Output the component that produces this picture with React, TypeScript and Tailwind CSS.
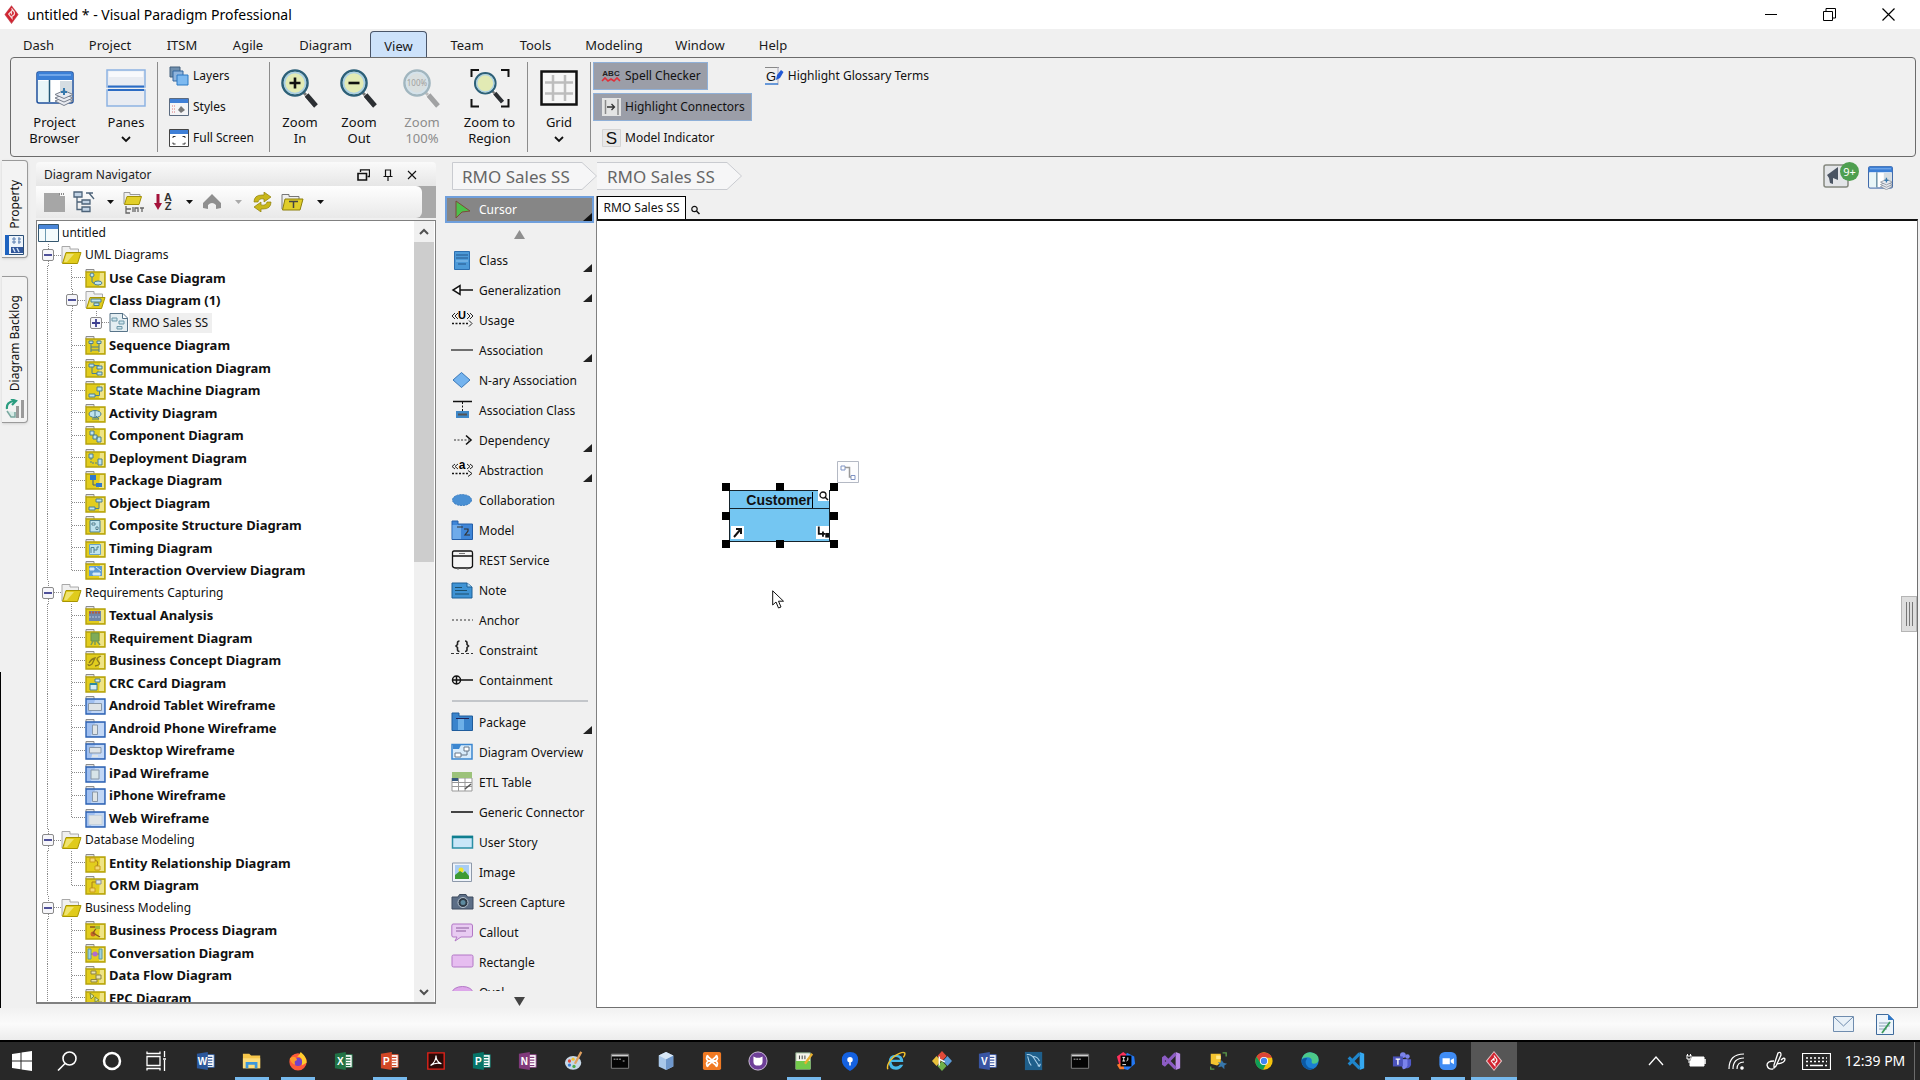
import React from 'react';

/* ---------- shared icons ---------- */

function Logo() {
  return (
    <svg width="15" height="19" viewBox="0 0 16 20">
      <path d="M8 0 15.500 10 8 20 .5 10Z" fill="#c8434f" />
      <path d="M8 1.500 14.300 10 8 18.500 1.700 10Z" fill="#d2232f" />
      <path d="M8 3.500 11 7.500Q12 10.500 8.500 12V14L5 9.500 8 6.500V10" fill="none" stroke="#f4dcdc" strokeWidth="1.300" />
    </svg>
  );
}

function BrowserIcon({ w, h }: { w: number; h: number }) {
  return (
    <svg width={w} height={h} viewBox="0 0 38 35" preserveAspectRatio="none">
      <rect x="1" y="1" width="36" height="31" rx="2" fill="#fff" stroke="#1d4f9c" strokeWidth="1.500" />
      <path d="M1 3Q1 1 3 1H35Q37 1 37 3V9H1Z" fill="#3b7fd6" />
      <path d="M3 3H35V5H3Z" fill="#6fa5e8" />
      <path d="M2 10H13V31H2Z" fill="#e9f6f8" />
      <path d="M24 10H36V31H24Z" fill="#d5dde2" />
      <path d="M13.500 9V31" stroke="#235a78" strokeWidth="1.500" />
      <g fill="#e8eaf0" stroke="#777f8c" strokeWidth="1">
        <path d="M19 30 28 26 37 30 28 34.500Z" />
        <path d="M19 27 28 23 37 27 28 31Z" />
        <path d="M19 23.500 28 19.500 37 23.500 28 27.500Z" />
      </g>
      <path d="M28 17V24M25 21H31" stroke="#3779ad" strokeWidth="2" />
    </svg>
  );
}

function Magnifier({ kind }: { kind: 'in' | 'out' | '100' | 'region' }) {
  const faded = kind === '100';
  const region = kind === 'region';
  return (
    <svg width="40" height="40" viewBox="0 0 40 40">
      {region && (
        <path d="M1.500 9V2H9M31 2H38.500V9M1.500 31V38.500H9M31 38.500H38.500V31" fill="none" stroke="#111" strokeWidth="2" />
      )}
      <g transform={region ? 'translate(3 3) scale(.82)' : undefined} opacity={faded ? 0.4 : 1}>
        <path d="M24 25 36 38" stroke="#fff" strokeWidth="6" />
        <path d="M23 24 26 27" stroke="#777" strokeWidth="3" />
        <path d="M26.500 27 36 38" stroke="#2c2f33" strokeWidth="5" />
        <circle cx="15" cy="15" r="12.500" fill={faded ? '#b9c8c8' : '#e2eab4'} stroke="#2d6078" strokeWidth="2.600" />
        <circle cx="15" cy="15" r="10.500" fill="none" stroke="#a9cfe6" strokeWidth="1.600" />
        {kind === 'in' && <path d="M9.500 15H20.500M15 9.500V20.500" stroke="#111" strokeWidth="2.600" />}
        {kind === 'out' && <path d="M9.500 15H20.500" stroke="#111" strokeWidth="2.600" />}
        {faded && (
          <text x="15" y="18" fontSize="8" textAnchor="middle" fill="#222" fontFamily="Noto Sans">100%</text>
        )}
      </g>
    </svg>
  );
}

function ChevronDown() {
  return (
    <svg width="10" height="7" viewBox="0 0 10 7">
      <path d="M1 1 5 5 9 1" fill="none" stroke="#111" strokeWidth="1.800" />
    </svg>
  );
}

/* ---------- title bar and ribbon ---------- */

function TitleBar() {
  return (
    <header className="flex h-[29px] shrink-0 items-center bg-white">
      <span className="flex h-full flex-1 items-center gap-2 pl-1">
        <Logo />
        <h1 className="text-sm leading-5 text-black">untitled * - Visual Paradigm Professional</h1>
      </span>
      <div className="flex h-[30px] flex-[0_1_770px] items-center justify-end border-b border-black">
        <button aria-label="Minimize" className="flex w-[59px] justify-center">
          <svg width="12" height="12"><path d="M0 6.500H12" stroke="#000" /></svg>
        </button>
        <button aria-label="Restore" className="flex w-[59px] justify-center">
          <svg width="13" height="13" fill="none" stroke="#000"><path d="M.5 3.500H9.500V12.500H.5ZM3 3V.5H12.500V10H10" /></svg>
        </button>
        <button aria-label="Close" className="flex w-[59px] justify-center">
          <svg width="13" height="13"><path d="M.5.5 12.500 12.500M12.500.5.5 12.500" stroke="#000" strokeWidth="1.200" /></svg>
        </button>
        <span className="w-[2px]" />
      </div>
    </header>
  );
}

const tabs: [string, string][] = [
  ['Dash', 'w-[65px]'],
  ['Project', 'w-[78px]'],
  ['ITSM', 'w-[66px]'],
  ['Agile', 'w-[66px]'],
  ['Diagram', 'w-[89px]'],
  ['View', 'w-[57px]'],
  ['Team', 'w-20'],
  ['Tools', 'w-[57px]'],
  ['Modeling', 'w-[100px]'],
  ['Window', 'w-[72px]'],
  ['Help', 'w-[74px]'],
];

function RibbonTabs() {
  return (
    <nav className="flex h-7 shrink-0 items-end bg-[#f0f0f0] pl-1.5">
      {tabs.map(([name, w]) => (
        <button
          key={name}
          className={`${w} h-[26px] shrink-0 rounded-t-sm pt-0.5 text-[13px] leading-4 text-[#1a1a1a] ${
            name === 'View' ? 'border border-b-0 border-[#4a5568] bg-[#cde2fa]' : ''
          }`}
        >
          {name}
        </button>
      ))}
    </nav>
  );
}

function BigButton({ icon, lines, w, faded, chevron }: { icon: React.ReactNode; lines: string[]; w: string; faded?: boolean; chevron?: boolean }) {
  return (
    <button className={`${w} flex shrink-0 flex-col items-center pt-2 text-[13px] leading-4 ${faded ? 'text-[#8c8c8c]' : 'text-[#111]'}`}>
      <span className="mb-1 flex h-11 items-center justify-center">{icon}</span>
      {lines.map((l) => (
        <span key={l}>{l}</span>
      ))}
      {chevron && <span className="flex h-4 items-center pt-0.5"><ChevronDown /></span>}
    </button>
  );
}

function SmallButton({ icon, label, active }: { icon: React.ReactNode; label: string; active?: boolean }) {
  return (
    <button
      className={`flex h-7 items-center gap-1 pr-1.5 pl-[7px] text-[12px] leading-4 text-[#111] ${
        active ? 'border border-[#8fb0d8] bg-[#9b9ea8]' : 'border border-transparent'
      }`}
    >
      <span className="flex w-5 justify-center">{icon}</span>
      {label}
    </button>
  );
}

const Divider = () => <span className="my-1 w-px shrink-0 bg-[#8c8c8c]" />;

function Ribbon() {
  return (
    <section className="shrink-0 bg-[#f0f0f0] pr-[4px] pl-[10px]">
      <div className="flex h-[100px] rounded-[4px] border border-[#6b6b6b]">
        <BigButton w="w-[87px]" icon={<BrowserIcon w={38} h={35} />} lines={['Project', 'Browser']} />
        <BigButton
          w="w-[56px]"
          chevron
          lines={['Panes']}
          icon={
            <svg width="40" height="38" viewBox="0 0 40 38">
              <path d="M1 1H39V18H1ZM1 21H39V37H1Z" fill="#e9ecf2" stroke="#8db3e2" strokeWidth="1.500" />
              <path d="M2 17.500H38M2 21H38" stroke="#2c6cc4" strokeWidth="2" />
              <path d="M3 2.500H37V8H3Z" fill="#f8f9fc" />
            </svg>
          }
        />
        <span className="w-[3px]" />
        <Divider />
        <div className="flex w-[111px] flex-col gap-[3px] pt-1 pl-[3px]">
          <SmallButton
            label="Layers"
            icon={
              <svg width="20" height="20" viewBox="0 0 20 20">
                <path d="M1 1H11V11H1Z" fill="#6f8fae" stroke="#44607c" />
                <path d="M4 5H14V15H4Z" fill="#8fb4dc" stroke="#33679f" />
                <path d="M8 9H19V19H8Z" fill="#7db9f0" stroke="#2b78c4" />
              </svg>
            }
          />
          <SmallButton
            label="Styles"
            icon={
              <svg width="20" height="18" viewBox="0 0 20 18">
                <path d="M.5.5H19.500V17.500H.5Z" fill="#f4f4f6" stroke="#5b6b80" />
                <path d="M1 1H19V5H1Z" fill="#3f7fd6" />
                <path d="M3 8H7M3 11H7M3 14H7" stroke="#d77" strokeWidth="1" strokeDasharray="1 1" />
                <path d="m12 8 4 4-4 3-3-3Z" fill="#777" />
              </svg>
            }
          />
          <SmallButton
            label="Full Screen"
            icon={
              <svg width="20" height="18" viewBox="0 0 20 18">
                <path d="M.5.5H19.500V17.500H.5Z" fill="#fff" stroke="#444" />
                <path d="M1 1H19V5H1Z" fill="#3f7fd6" />
                <path d="M4 9V7.500H6.500M13.500 7.500H16V9M4 13.500V15H6.500M13.500 15H16V13.500" fill="none" stroke="#333" />
              </svg>
            }
          />
        </div>
        <Divider />
        <BigButton w="w-[60px]" icon={<Magnifier kind="in" />} lines={['Zoom', 'In']} />
        <BigButton w="w-[58px]" icon={<Magnifier kind="out" />} lines={['Zoom', 'Out']} />
        <BigButton w="w-[68px]" icon={<Magnifier kind="100" />} lines={['Zoom', '100%']} faded />
        <BigButton w="w-[67px]" icon={<Magnifier kind="region" />} lines={['Zoom to', 'Region']} />
        <span className="w-1" />
        <Divider />
        <BigButton
          w="w-[62px]"
          chevron
          lines={['Grid']}
          icon={
            <svg width="38" height="36" viewBox="0 0 38 36">
              <path d="M1.500 1.500H36.500V34.500H1.500Z" fill="#f6f6f6" stroke="#111" strokeWidth="2.500" />
              <path d="M13 5V31M25 5V31M5 12.500H33M5 23.500H33" stroke="#bdbdbd" strokeWidth="2.500" />
            </svg>
          }
        />
        <Divider />
        <div className="flex flex-col items-start gap-[3px] pt-1 pl-0.5">
          <SmallButton
            active
            label="Spell Checker"
            icon={
              <svg width="20" height="14" viewBox="0 0 20 14">
                <text x="10" y="7" fontSize="8" fontWeight="bold" textAnchor="middle" fontFamily="Liberation Sans" fill="#222">ABC</text>
                <path d="M1 12 4 9 7 12 10 10 13 12 16 9 19 12" fill="none" stroke="#e0303a" strokeWidth="1.600" />
              </svg>
            }
          />
          <SmallButton
            active
            label="Highlight Connectors"
            icon={
              <svg width="19" height="18" viewBox="0 0 19 18">
                <path d="M0 0H19V18H0Z" fill="#e4e4e4" />
                <path d="M3.500 2V16M16 1V17" stroke="#8a8a8a" strokeWidth="1.500" />
                <path d="M5 9H12M9.500 6 12.500 9 9.500 12" fill="none" stroke="#333" strokeWidth="1.300" />
              </svg>
            }
          />
          <SmallButton
            label="Model Indicator"
            icon={
              <svg width="19" height="20" viewBox="0 0 19 20">
                <path d="M.5 1.500H18.500V18.500H.5Z" fill="#e8e8e8" stroke="#d4d4d4" />
                <text x="9.500" y="16" fontSize="17" textAnchor="middle" fontFamily="Liberation Sans" fill="#111">S</text>
              </svg>
            }
          />
        </div>
        <div className="pt-1 pl-1">
          <SmallButton
            label="Highlight Glossary Terms"
            icon={
              <svg width="20" height="20" viewBox="0 0 20 20">
                <path d="M1 1.500H15" stroke="#888" />
                <path d="M14 1V19" stroke="#aab" />
                <path d="M1 18H14" stroke="#3a7bd0" strokeWidth="1.500" />
                <text x="7" y="15" fontSize="13" textAnchor="middle" fontFamily="Liberation Sans" fill="#111">G</text>
                <path d="M12 14 13 9 17 4 19.500 6 16 12Z" fill="#2159d6" />
              </svg>
            }
          />
        </div>
      </div>
    </section>
  );
}

/* ---------- side strip ---------- */

function SideStrip() {
  return (
    <aside className="flex w-[29px] shrink-0 flex-col gap-[18px] bg-[#f0f0f0] pt-[3px]">
      <button className="ml-0.5 flex h-[98px] w-[26px] flex-col items-center justify-end gap-1.5 rounded-r-sm border border-l-0 border-[#9a9a9a] bg-[#f3f3f3] pb-[2px] shadow-sm">
        <span className="rotate-180 text-[12px] leading-4 text-[#111] [writing-mode:vertical-rl]">Property</span>
        <svg width="19" height="20" viewBox="0 0 19 20" className="shrink-0">
          <path d="M.5.5H18.500V19.500H.5Z" fill="#eef4fb" stroke="#2b4f78" />
          <path d="M0 0H4V20H0Z" fill="#1e63c0" />
          <path d="M7 4H11M7 7H11M13 4H16M13 7H16M9 2V9M14 2V9" stroke="#5b7fb0" />
          <path d="M6 12H18V18H6Z" fill="#31569a" />
          <path d="M8 13 10 17M12 13 14 17" stroke="#cfe0f5" strokeWidth="1.500" />
        </svg>
      </button>
      <button className="ml-0.5 flex h-[147px] w-[26px] flex-col items-center justify-end gap-2 rounded-r-sm border border-l-0 border-[#9a9a9a] bg-[#f3f3f3] pb-[3px] shadow-sm">
        <span className="rotate-180 text-[12px] leading-4 text-[#111] [writing-mode:vertical-rl]">Diagram Backlog</span>
        <svg width="20" height="20" viewBox="0 0 20 20" className="shrink-0">
          <path d="M2 10Q1 3 9 2M6 0 11 2 7 6" fill="none" stroke="#2b9d80" strokeWidth="2.200" />
          <path d="M11 7H14V19H11ZM16 1H19V19H16Z" fill="#9a9a9a" />
          <path d="M2 12 6 18H10V13" fill="#d6ebe6" stroke="#7aa8a0" strokeWidth="1.500" />
        </svg>
      </button>
      <span className="mt-[231px] w-px flex-1 bg-black" />
    </aside>
  );
}

/* ---------- diagram navigator ---------- */

const P = '#bfe3ee';
const D = '#4d7f8f';
const glyphs: Record<string, React.ReactNode> = {
  usecase: <><circle cx="7" cy="7" r="2" fill={P} stroke={D} /><path d="M7 9V14L10 16" fill="none" stroke={D} /><ellipse cx="13" cy="15" rx="4" ry="2" fill={P} stroke={D} /></>,
  seq: <><path d="M4 6H8V8.500H4ZM12 6H16V8.500H12Z" fill={P} stroke={D} /><path d="M6 9V17M14 9V17M6 12H14M6 15H14" stroke={D} /></>,
  comm: <><path d="M4 6H9V9H4ZM12 8H17V11H12ZM12 14H17V17H12Z" fill={P} stroke={D} /><path d="M7 9V15.500H12M9 7.500H14" fill="none" stroke={D} /></>,
  state: <><path d="M12 7H17V11H12ZM4 14H10V17H4Z" fill={P} stroke={D} /><path d="M10 15.500H14.500V11" fill="none" stroke={D} /></>,
  activity: <><ellipse cx="10" cy="11" rx="6" ry="3.500" fill={P} stroke={D} /><path d="M10 8V14M7 16H14L11 13" fill="none" stroke={D} /></>,
  component: <><path d="M5 6H9V10H5ZM8 10H12V14H8ZM12 12H16V17H12Z" fill={P} stroke={D} /></>,
  deploy: <><path d="M4 6H8V10H4ZM13 11H17V17H13Z" fill={P} stroke={D} /><path d="M6 10V15H13" fill="none" stroke={D} strokeDasharray="2 1" /></>,
  pkg: <><path d="M5 5H11V10H5ZM11 13H17V17H11Z" fill="#2f78cc" /><path d="M8 10V15H11" fill="none" stroke="#3b5f7d" /></>,
  object: <><path d="M11 6H17V9H11ZM4 14H10V17H4Z" fill={P} stroke={D} /><path d="M10 15.500H14V9" fill="none" stroke={D} /></>,
  composite: <><path d="M5 5.500H15V17H5Z" fill={P} stroke={D} /><path d="M7 8H10V10H7ZM11 12H13V14.500H11Z" fill="#fff" stroke={D} /></>,
  timing: <><path d="M4.500 6.500H15.500V16.500H4.500Z" fill={P} stroke="#6aa4c4" /><path d="M6 15V9.500H9V15M9 12H12V9H14" fill="none" stroke={D} /></>,
  overview: <><path d="M4 6H17V16H4Z" fill="#5e9bd4" /><path d="M5 8H9V10H5ZM8 13H15V15H8ZM11 7 16 11" fill="#dff0fa" stroke="#cfe6f6" /></>,
  text: <><path d="M4 6H16V16H4Z" fill="#6f86a8" /><path d="M4 7.500H16" stroke="#b35c3c" strokeWidth="2" strokeDasharray="2 1" /><path d="M4 12H16" stroke="#b9c8dd" strokeDasharray="2 1" /></>,
  req: <><path d="M6 5H14V13H6Z" fill="#7eab58" stroke="#6b9447" /><path d="M8 13 6 17M12 13 15 17M10 13V17" stroke="#779a5d" strokeWidth="1.500" /></>,
  concept: <><path d="M3 14Q3 17 7 14L10 8Q6 9 4 13M16 6Q10 8 13 11Q17 15 10 16" fill="none" stroke="#8b7a1d" strokeWidth="1.300" /></>,
  crc: <><path d="M5 10.500H12V17H5ZM10 6H15V9H10Z" fill="#d6ecf4" stroke={D} /><path d="M5 11H12" stroke="#2b8aa0" strokeWidth="2" /></>,
  erd: <><path d="M5 5H10V9H5ZM10 13H15V17H10Z" fill="#f4d873" stroke="#c99b1c" /><path d="M10 7Q14 8 12 13" fill="none" stroke="#a8801a" /></>,
  orm: <><path d="M11 5H16V9H11Z" fill="#dfe5ea" stroke="#8a9199" /><path d="M5 13H10V17H5Z" fill="#f4d873" stroke="#c99b1c" /><path d="M7 13V7H11" fill="none" stroke="#a8801a" /></>,
  bpd: <><circle cx="8" cy="14" r="2.500" fill="#c9652b" /><path d="M5 7H12L8 13L15 17" fill="none" stroke="#8a5a20" strokeWidth="1.300" /><path d="M10 6H15V9H10Z" fill="#9fb838" /></>,
  conv: <><path d="M3 6H6V16H3ZM14 6H17V16H14Z" fill="#9fd0dc" stroke="#5a9aa8" /><path d="M6 11H14" stroke="#777" /><circle cx="10" cy="11" r="2.500" fill="#b06cd0" /></>,
  dfd: <><path d="M6 6H11V9H6ZM11 10H16V14H11ZM6 14.500H12V17H6Z" fill="#e8e2b0" stroke="#8b8245" /></>,
  epc: <><path d="M5 5 9 8 6 11ZM10 9 14 12 10 14ZM13 14H17V17H13Z" fill="#d9e8b0" stroke="#7f8c3a" /></>,
  wide: <path d="M3.500 8.500H16.500V15.500H3.500Z" fill="#dfe4e6" stroke="#8897a8" />,
  tall: <path d="M7.500 7H12.500V16.500H7.500Z" fill="#dfe4e6" stroke="#8897a8" />,
  desk: <><path d="M4.500 7.500H16V13H4.500Z" fill="#dfe4e6" stroke="#8897a8" /><path d="M7 16H13" stroke="#dfe4e6" strokeWidth="2" /></>,
  pad: <path d="M6 7H14V16H6Z" fill="#d8e4e8" stroke="#8897a8" />,
  web: <path d="M4 7.500H17V16.500H4Z" fill="#dfe4e6" stroke="#c6d2dc" />,
};

function DiagramFolder({ glyph, blue }: { glyph: string; blue?: boolean }) {
  return (
    <svg width="21" height="20" viewBox="0 0 21 20" className="shrink-0">
      <path d="M1 4V1.500H9V4" fill="#e3e3e3" stroke="#8d8d8d" />
      <path d="M1 4H20V19H1Z" fill={blue ? '#9fbff0' : '#e2cd1d'} stroke={blue ? '#2d62b3' : '#b5a20c'} strokeWidth="1.400" />
      <path d={blue ? 'M10 5H19V18H6Z' : 'M15 5H19V18H14Z'} fill={blue ? '#c3d8f6' : '#efe486'} />
      {glyphs[glyph]}
    </svg>
  );
}

function OpenFolder({ diagram }: { diagram?: boolean }) {
  return (
    <svg width="21" height="20" viewBox="0 0 21 20" className="shrink-0">
      <path d="M1 18V1.500H9V4H17.500V8" fill="#f0f0f0" stroke="#a8a8a8" />
      <path d="M1.500 18.500 5 7.500H20L16.500 18.500Z" fill="#e0cb1c" stroke="#a89500" />
      <path d="M5.500 9H13L6 17H3Z" fill="#efe36f" />
      {diagram && <path d="M6 9H16V12H6ZM9 13H14V15.500H9Z" fill={P} stroke={D} />}
    </svg>
  );
}

/* dotted guide lines that tie the rows of the tree together */
const dots = 'bg-[repeating-linear-gradient(to_bottom,#8a8a8a_0_1px,transparent_1px_2px)]';
function Guide({ half }: { half?: boolean }) {
  return <span className={`w-px shrink-0 ${dots} ${half ? 'h-1/2 self-start' : 'h-full'}`} />;
}
const Twig = ({ w }: { w: string }) => (
  <span className={`${w} h-px shrink-0 bg-[repeating-linear-gradient(to_right,#8a8a8a_0_1px,transparent_1px_2px)]`} />
);

function Expander({ open, end }: { open: boolean; end?: boolean }) {
  return (
    <span className="flex h-full flex-col items-center">
      <span className={`w-px flex-1 ${dots}`} />
      <button aria-label={open ? 'Collapse' : 'Expand'} className="flex size-3 shrink-0 items-center justify-center rounded-xs border border-[#8a8a8a] bg-[#f6f6fa]">
        <svg width="10" height="10" viewBox="0 0 10 10">
          <path d={open ? 'M1 5H9' : 'M1 5H9M5 1V9'} stroke="#3d3f8f" strokeWidth="1.800" />
        </svg>
      </button>
      <span className={`w-px flex-1 ${end ? '' : dots}`} />
    </span>
  );
}

type Row = { t: string; k: 'root' | 'group' | 'leaf' | 'class' | 'doc'; g?: string; blue?: boolean; last?: boolean };

const rows: Row[] = [
  { t: 'untitled', k: 'root' },
  { t: 'UML Diagrams', k: 'group' },
  { t: 'Use Case Diagram', k: 'leaf', g: 'usecase' },
  { t: 'Class Diagram (1)', k: 'class' },
  { t: 'RMO Sales SS', k: 'doc' },
  { t: 'Sequence Diagram', k: 'leaf', g: 'seq' },
  { t: 'Communication Diagram', k: 'leaf', g: 'comm' },
  { t: 'State Machine Diagram', k: 'leaf', g: 'state' },
  { t: 'Activity Diagram', k: 'leaf', g: 'activity' },
  { t: 'Component Diagram', k: 'leaf', g: 'component' },
  { t: 'Deployment Diagram', k: 'leaf', g: 'deploy' },
  { t: 'Package Diagram', k: 'leaf', g: 'pkg' },
  { t: 'Object Diagram', k: 'leaf', g: 'object' },
  { t: 'Composite Structure Diagram', k: 'leaf', g: 'composite' },
  { t: 'Timing Diagram', k: 'leaf', g: 'timing' },
  { t: 'Interaction Overview Diagram', k: 'leaf', g: 'overview', last: true },
  { t: 'Requirements Capturing', k: 'group' },
  { t: 'Textual Analysis', k: 'leaf', g: 'text' },
  { t: 'Requirement Diagram', k: 'leaf', g: 'req' },
  { t: 'Business Concept Diagram', k: 'leaf', g: 'concept' },
  { t: 'CRC Card Diagram', k: 'leaf', g: 'crc' },
  { t: 'Android Tablet Wireframe', k: 'leaf', g: 'wide', blue: true },
  { t: 'Android Phone Wireframe', k: 'leaf', g: 'tall', blue: true },
  { t: 'Desktop Wireframe', k: 'leaf', g: 'desk', blue: true },
  { t: 'iPad Wireframe', k: 'leaf', g: 'pad', blue: true },
  { t: 'iPhone Wireframe', k: 'leaf', g: 'tall', blue: true },
  { t: 'Web Wireframe', k: 'leaf', g: 'web', blue: true, last: true },
  { t: 'Database Modeling', k: 'group' },
  { t: 'Entity Relationship Diagram', k: 'leaf', g: 'erd' },
  { t: 'ORM Diagram', k: 'leaf', g: 'orm', last: true },
  { t: 'Business Modeling', k: 'group' },
  { t: 'Business Process Diagram', k: 'leaf', g: 'bpd' },
  { t: 'Conversation Diagram', k: 'leaf', g: 'conv' },
  { t: 'Data Flow Diagram', k: 'leaf', g: 'dfd' },
  { t: 'EPC Diagram', k: 'leaf', g: 'epc' },
];

function TreeRow({ row, even }: { row: Row; even: boolean }) {
  const bold = row.k === 'leaf' || row.k === 'class';
  return (
    <li className={`flex shrink-0 items-center ${even ? 'h-[23px]' : 'h-[22px]'}`}>
      {row.k === 'root' && (
        <span className="flex pl-px">
          <svg width="21" height="18" viewBox="0 0 21 18">
            <path d="M.5.5H20.500V17.500H.5Z" fill="#f4fbfc" stroke="#34566e" />
            <path d="M1 1H20V5H1Z" fill="#4a86d8" />
            <path d="M7.500 5V17" stroke="#6c9ab0" />
          </svg>
        </span>
      )}
      {row.k === 'group' && (
        <span className="flex h-full items-center pl-[5px]">
          <Expander open />
          <Twig w="w-[7px]" />
          <OpenFolder />
        </span>
      )}
      {row.k === 'leaf' && (
        <span className="flex h-full items-center pl-2.5">
          <Guide />
          <span className="w-[23px]" />
          <Guide half={row.last} />
          <Twig w="w-[13px]" />
          <DiagramFolder glyph={row.g!} blue={row.blue} />
        </span>
      )}
      {row.k === 'class' && (
        <span className="flex h-full items-center pl-2.5">
          <Guide />
          <span className="w-[18px]" />
          <Expander open />
          <Twig w="w-[7px]" />
          <OpenFolder diagram />
        </span>
      )}
      {row.k === 'doc' && (
        <span className="flex h-full items-center pl-2.5">
          <Guide />
          <span className="w-[23px]" />
          <Guide />
          <span className="w-[18px]" />
          <Expander open={false} end />
          <Twig w="w-[7px]" />
          <svg width="20" height="19" viewBox="0 0 20 19">
            <path d="M1 .5H14L18.500 5V18.500H1Z" fill="#e4eef2" stroke="#587489" />
            <path d="M13.500 1V5.500H18" fill="#fff" stroke="#587489" />
            <path d="M3 5H8V8H3ZM10 8H15V11H10ZM8 13.500H13V16H8Z" fill="#cfe6ee" stroke="#6d97a8" />
          </svg>
        </span>
      )}
      <span
        className={`whitespace-nowrap pl-[3px] leading-5 text-[#111] ${bold ? 'text-[13px] font-bold' : 'text-[12px]'} ${
          row.k === 'doc' ? 'bg-[#efefef] pr-1' : ''
        }`}
      >
        {row.t}
      </span>
    </li>
  );
}

const Caret = ({ faded }: { faded?: boolean }) => (
  <svg width="7" height="4" viewBox="0 0 7 4"><path d="M0 0H7L3.500 4Z" fill={faded ? '#aaa' : '#111'} /></svg>
);

function Navigator() {
  const cell = 'flex h-full shrink-0 items-center justify-center';
  return (
    <section className="flex w-[400px] shrink-0 flex-col pt-[5px] pb-1">
      <div className="flex h-6 shrink-0 items-center rounded-t bg-linear-to-b from-[#fafafa] to-[#e6e6e6] pt-0.5 pl-2">
        <h2 className="flex-1 text-[12px] leading-4 text-[#222]">Diagram Navigator</h2>
        <button aria-label="Float" className="w-[26px]">
          <svg width="13" height="12" viewBox="0 0 13 12" fill="none" stroke="#111"><path d="M1 4.500H9.500V11H1Z" strokeWidth="1.600" /><path d="M3.500 3V.8H12.500V7.500H10.500" strokeWidth="1.300" /></svg>
        </button>
        <button aria-label="Pin" className="w-6">
          <svg width="10" height="12" viewBox="0 0 10 12" fill="none" stroke="#111"><path d="M2.500 7V1H7.500V7M.5 7.500H9.500M5 7.500V12" strokeWidth="1.200" /></svg>
        </button>
        <button aria-label="Close panel" className="w-[29px]">
          <svg width="10" height="10" viewBox="0 0 10 10"><path d="M1 1 9 9M9 1 1 9" stroke="#111" strokeWidth="1.100" /></svg>
        </button>
      </div>
      <div className="flex h-8 shrink-0 bg-[#a9a9a9]">
        <div className="flex flex-1 items-center rounded-r-md bg-linear-to-b from-[#fefefe] to-[#e9e9e9] pl-1">
          <button aria-label="New diagram" className={`${cell} w-[28px]`}>
            <svg width="21" height="20" viewBox="0 0 21 20"><path d="M0 1H16V4H21V20H0Z" fill="#a6a6a6" /><path d="M15 2H21" stroke="#888" strokeDasharray="1 1" strokeWidth="2" /></svg>
          </button>
          <button aria-label="Tree layout" className={`${cell} w-[32px]`}>
            <svg width="22" height="22" viewBox="0 0 22 22">
              <path d="M1 1H9V6H1ZM9 9H17V13H9ZM9 16H17V20.500H9Z" fill="#c3d4e6" stroke="#4d6379" strokeWidth="1.300" />
              <path d="M4 6V18.500H9M4 11H9M13 2H20M16 2 21 8" fill="none" stroke="#4d6379" strokeWidth="1.300" />
            </svg>
          </button>
          <button aria-label="Tree layout menu" className={`${cell} w-5`}><Caret /></button>
          <button aria-label="Show model" className={`${cell} w-7`}>
            <svg width="22" height="23" viewBox="0 0 22 23">
              <path d="M1 13V1.500H7V3.500H17V6" fill="#eee" stroke="#999" />
              <path d="M1.500 13.500 4 5.500H18.500L16 13.500Z" fill="#e2cf2a" stroke="#a39107" />
              <path d="M3 15V22H7M3 18H8M10 16V21M12 21V17H15V21M17 17H21M19 17V21" fill="none" stroke="#666" strokeWidth="1.300" />
            </svg>
          </button>
          <button aria-label="Sort" className={`${cell} w-8`}>
            <svg width="20" height="24" viewBox="0 0 20 24">
              <path d="M4 4V15" stroke="#a5123a" strokeWidth="3" /><path d="M0 13H8L4 20Z" fill="#a5123a" />
              <text x="14" y="11" fontSize="11" fontWeight="bold" textAnchor="middle" fontFamily="Liberation Sans" fill="#333">A</text>
              <text x="14" y="20" fontSize="11" fontWeight="bold" textAnchor="middle" fontFamily="Liberation Sans" fill="#333">Z</text>
            </svg>
          </button>
          <button aria-label="Sort menu" className={`${cell} w-[18px]`}><Caret /></button>
          <button aria-label="Move up" className={`${cell} w-7`}>
            <svg width="20" height="16" viewBox="0 0 20 16"><path d="M10 0 19 9V14L14 15V11Q10 7 6 11V15L1 14V9Z" fill="#8f8f8f" /></svg>
          </button>
          <button aria-label="Move up menu" className={`${cell} w-6`}><Caret faded /></button>
          <button aria-label="Refresh" className={`${cell} w-[24px]`}>
            <svg width="19" height="20" viewBox="0 0 19 20">
              <path d="M1 10Q1 3 9 3H11V0L18 5 11 10V7Q6 6 5 10Z" fill="#c9b71a" stroke="#8c7e0a" strokeWidth=".7" />
              <path d="M18 10Q18 17 10 17H8V20L1 15 8 10V13Q13 14 14 10Z" fill="#c9b71a" stroke="#8c7e0a" strokeWidth=".7" />
            </svg>
          </button>
          <button aria-label="Filter folder" className={`${cell} w-9`}>
            <svg width="23" height="18" viewBox="0 0 23 18">
              <path d="M1 16V1.500H8V3.500H18V6" fill="#eee" stroke="#777" />
              <path d="M1.500 17 4 6H22L19 17Z" fill="#e0cd2a" stroke="#8c7e0a" />
              <path d="M8 8.500H17M12.500 8.500V15" stroke="#444" strokeWidth="1.500" />
            </svg>
          </button>
          <button aria-label="Filter menu" className={`${cell} w-5`}><Caret /></button>
        </div>
        <span className="w-3.5 shrink-0" />
      </div>
      <div className="mt-0.5 flex min-h-0 flex-1 border border-b-2 border-[#808080] bg-white">
        <ul className="flex min-w-0 flex-1 flex-col overflow-hidden">
          {rows.map((r, i) => (
            <TreeRow key={r.t} row={r} even={i % 2 === 0} />
          ))}
        </ul>
        <div className="flex w-[21px] shrink-0 flex-col border-r border-white bg-[#f0f0f0]">
          <button aria-label="Scroll up" className="flex h-[21px] shrink-0 items-center justify-center">
            <svg width="10" height="7" viewBox="0 0 10 7"><path d="M1 6 5 2 9 6" fill="none" stroke="#505050" strokeWidth="2" /></svg>
          </button>
          <span className="h-[41%] bg-[#cdcdcd]" />
          <span className="flex-1" />
          <button aria-label="Scroll down" className="flex h-[19px] shrink-0 items-center justify-center">
            <svg width="10" height="7" viewBox="0 0 10 7"><path d="M1 1 5 5 9 1" fill="none" stroke="#505050" strokeWidth="2" /></svg>
          </button>
        </div>
      </div>
    </section>
  );
}

/* ---------- palette ---------- */

const blueFill = '#4a90d4';
const palette: { t: string; more?: boolean; icon: React.ReactNode }[] = [
  { t: 'Class', more: true, icon: <><path d="M3.500 1.500H18.500V19.500H3.500Z" fill="#4d9ad8" stroke="#2d6fb0" /><path d="M5 5H17M5 8H17M7 14H15" stroke="#24568c" /><path d="M5 11H17" stroke="#8fc4ee" /></> },
  { t: 'Generalization', more: true, icon: <><path d="M9 10H22" stroke="#111" strokeWidth="1.500" /><path d="M9 5.500V14.500L2 10Z" fill="#fff" stroke="#111" strokeWidth="1.500" /></> },
  { t: 'Usage', icon: <><text x="11" y="9" fontSize="11" fontWeight="bold" textAnchor="middle" fontFamily="Liberation Sans">U</text><path d="M4 3 1 6 4 9M7 3 4 6 7 9M16 3 19 6 16 9M19 3 22 6 19 9M18 10.500 21 13.500 18 16.500" fill="none" stroke="#222" /><path d="M1 13.500H18" stroke="#111" strokeDasharray="2 1.500" strokeWidth="1.300" /></> },
  { t: 'Association', more: true, icon: <path d="M0 10H22" stroke="#444" strokeWidth="1.500" /> },
  { t: 'N-ary Association', icon: <path d="M10.500 2.500 19 10 10.500 17.500 2 10Z" fill="#74b3ee" stroke="#3a78b8" /> },
  { t: 'Association Class', icon: <><path d="M2 1.500H21" stroke="#111" strokeWidth="1.500" /><path d="M11.500 2V11" stroke="#111" strokeDasharray="2 1.500" /><path d="M5 11H18V18H5Z" fill="#3f88c8" /><path d="M7 14.500H16" stroke="#555" strokeWidth="2" /></> },
  { t: 'Dependency', more: true, icon: <><path d="M3 10H18" stroke="#333" strokeDasharray="2 1.500" /><path d="M15 5.500 20 10 15 14.500" fill="none" stroke="#111" strokeWidth="1.600" /></> },
  { t: 'Abstraction', more: true, icon: <><text x="11" y="9" fontSize="12" fontWeight="bold" textAnchor="middle" fontFamily="Liberation Sans">a</text><path d="M4 4 1 6.500 4 9M7 4 4 6.500 7 9M16 4 19 6.500 16 9M19 4 22 6.500 19 9M17 10.500 21 13.500 17 16.500" fill="none" stroke="#222" /><path d="M1 13.500H18" stroke="#111" strokeDasharray="2 1.500" strokeWidth="1.300" /></> },
  { t: 'Collaboration', icon: <ellipse cx="11" cy="10" rx="9.500" ry="5.500" fill={blueFill} stroke="#3a7cc0" strokeDasharray="2 1" /> },
  { t: 'Model', icon: <><path d="M1 1H7V4H21.500V19.500H1Z" fill="#3f86d8" stroke="#245ea8" /><path d="M1.500 5H10V19H1.500Z" fill="#6fabea" /><path d="M6 7H12M13 9H17V11L14 15H19" fill="none" stroke="#333" strokeWidth="1.200" /></> },
  { t: 'REST Service', icon: <><path d="M3 1H20Q21.500 1 21.500 3V16Q21 18 18 18H5Q2 18 1.500 16V3Q1.500 1 3 1ZM1.500 6H21.500" fill="#f4f4f4" stroke="#111" strokeWidth="1.300" /><path d="M8 3.500H14M6 19H8M15 19H17" stroke="#777" /></> },
  { t: 'Note', icon: <><path d="M1 3H16L21 7V18H1Z" fill="#3f93d4" stroke="#1c5f96" /><path d="M16 3V7H21" fill="#a9d4f2" stroke="#1c5f96" /><path d="M4 7.500H11M4 10.500H16M4 14H18" stroke="#1c4f6c" strokeWidth="1.200" /></> },
  { t: 'Anchor', icon: <path d="M1 10H22" stroke="#333" strokeDasharray="2 2" /> },
  { t: 'Constraint', icon: <><path d="M8.500 1Q6.500 1 6.500 3V4.500L5 6 6.500 7.500V9.500Q6.500 11.500 8.500 11.500M14 1Q16 1 16 3V4.500L17.500 6 16 7.500V9.500Q16 11.500 14 11.500" fill="none" stroke="#222" strokeWidth="1.600" /><path d="M0 13.500H22" stroke="#333" strokeDasharray="3 2" /></> },
  { t: 'Containment', icon: <><circle cx="5.500" cy="10" r="4" fill="none" stroke="#111" strokeWidth="1.500" /><path d="M1.500 10H22M5.500 6V14" stroke="#111" strokeWidth="1.500" /></> },
];
const palette2: typeof palette = [
  { t: 'Package', more: true, icon: <><path d="M1 1H8V4H21.500V18.500H1Z" fill="#3a84cc" stroke="#1f5c9c" /><path d="M7 7H13V18H7Z" fill="#6db0e8" /><path d="M5 6.500H18" stroke="#225" /></> },
  { t: 'Diagram Overview', icon: <><path d="M1 2.500H21V17H1Z" fill="#d8ebfb" stroke="#3b86d0" strokeWidth="1.500" /><path d="M2 3H10L8 7H2Z" fill="#3b86d0" /><path d="M4 11H10V15H4ZM13 5H18V9H13Z" fill="#fff" stroke="#678" /><path d="M10 13H16V9" fill="none" stroke="#678" /></> },
  { t: 'ETL Table', icon: <><path d="M1 6H21V19H1Z" fill="#fff" stroke="#999" /><path d="M1 0H21V6H1Z" fill="#9cc27a" /><path d="M1 10.500H21M1 14.500H21M7.500 6V19M14 6V19" stroke="#999" /><path d="M1 6H7V9H1Z" fill="#36597f" /><path d="M14 17 20 12" stroke="#555" strokeWidth="1.500" /></> },
  { t: 'Generic Connector', icon: <path d="M0 10H22" stroke="#444" strokeWidth="2" /> },
  { t: 'User Story', icon: <><path d="M1.500 4.500H21.500V16H1.500Z" fill="#c9e6f8" stroke="#2b8fa5" strokeWidth="1.500" /><path d="M1 5H22" stroke="#0f7e8f" strokeWidth="2.500" /></> },
  { t: 'Image', icon: <><path d="M1.500 1H20.500V19.500H1.500Z" fill="#eef3fa" stroke="#8d99aa" /><path d="M4 3H18V17H4Z" fill="#a9cdf4" /><circle cx="10" cy="8" r="2.500" fill="#f2e52b" /><path d="M4 17V13L9 9 12 11 14 9 18 14V17Z" fill="#3c9a35" /></> },
  { t: 'Screen Capture', icon: <><path d="M1 5H7L8.500 2.500H15L16.500 5H22V17H1Z" fill="#5c6e86" stroke="#3d4b5e" /><circle cx="12" cy="10.500" r="5" fill="#2e3b47" stroke="#b6c3cf" /><circle cx="12" cy="10.500" r="2.500" fill="#5e8ba0" /></> },
  { t: 'Callout', icon: <><path d="M2 2H20Q21.500 2 21.500 4V13Q21.500 15 20 15H10L4 19 6 15H2Q.8 15 .8 13V4Q.8 2 2 2Z" fill="#e8cbf2" stroke="#b277c6" /><path d="M5 6H18M5 9H15" stroke="#8a5a9c" /></> },
  { t: 'Rectangle', icon: <rect x="1" y="3" width="21" height="12" rx="1.500" fill="#e6bdf0" stroke="#b277c6" /> },
  { t: 'Oval', icon: <ellipse cx="11.500" cy="11" rx="10.500" ry="6.500" fill="#dda6ea" stroke="#b277c6" /> },
];

function PaletteItem({ item }: { item: (typeof palette)[number] }) {
  return (
    <button className="flex h-[30px] w-full shrink-0 items-center pl-[15px] text-left">
      <svg width="23" height="20" viewBox="0 0 23 20" className="mb-0.5 shrink-0">{item.icon}</svg>
      <span className="flex-1 whitespace-nowrap pl-[5px] text-[12px] leading-4 text-[#111]">{item.t}</span>
      {item.more && <svg width="9" height="8" viewBox="0 0 9 8" className="mr-1 mb-1 shrink-0 self-end"><path d="M9 0V8H0Z" fill="#222" /></svg>}
    </button>
  );
}

function Palette() {
  return (
    <section className="flex w-[161px] shrink-0 flex-col border-r border-[#808080] bg-[#f0f0f0]">
      <button className="ml-[9px] mr-0.5 flex h-[27px] shrink-0 items-center border-2 border-[#6f9fdc] bg-[#868686] pl-2">
        <svg width="16" height="19" viewBox="0 0 16 19"><path d="M1 1 15 11 7 12 1 18Z" fill="#4cc04a" stroke="#7b4b3a" /></svg>
        <span className="flex-1 pl-2 text-left text-[12px] leading-4 text-white">Cursor</span>
        <svg width="9" height="8" viewBox="0 0 9 8" className="self-end"><path d="M9 0V8H0Z" fill="#111" /></svg>
      </button>
      <button aria-label="Scroll palette up" className="flex h-[23px] shrink-0 items-center justify-center pl-1.5">
        <svg width="11" height="9" viewBox="0 0 11 9"><path d="M5.500 0 11 9H0Z" fill="#8f8f8f" /></svg>
      </button>
      <div className="flex min-h-0 flex-1 flex-col overflow-hidden">
        {palette.map((p) => <PaletteItem key={p.t} item={p} />)}
        <hr className="mr-2 ml-4 mt-1 mb-1.5 shrink-0 border-t-2 border-[#c3c6ca]" />
        {palette2.map((p) => <PaletteItem key={p.t} item={p} />)}
      </div>
      <button aria-label="Scroll palette down" className="flex h-[17px] shrink-0 items-center justify-center pt-1 pl-1.5">
        <svg width="11" height="9" viewBox="0 0 11 9"><path d="M0 0H11L5.500 9Z" fill="#444" /></svg>
      </button>
    </section>
  );
}

/* ---------- editor ---------- */

function Crumb({ first }: { first?: boolean }) {
  return (
    <a href="#" className="relative flex h-7 w-[145px] items-center text-[17px] leading-6 text-[#666]">
      <svg width="161" height="28" viewBox="0 0 161 28" className="absolute left-0 top-0">
        <path d={first ? 'M.5.5H130L144.500 14 130 27.500H.5Z' : 'M-15 .5H130L144.500 14 130 27.500H-15'} fill="#f6f6f7" stroke="#c9cbd0" />
      </svg>
      <span className="relative pt-0.5 pl-2.5">RMO Sales SS</span>
    </a>
  );
}

const handles = [
  'left-[125px] top-[262px]', 'left-[179px] top-[262px]', 'left-[233px] top-[262px]',
  'left-[125px] top-[291px]', 'left-[233px] top-[291px]',
  'left-[125px] top-[319px]', 'left-[179px] top-[319px]', 'left-[233px] top-[319px]',
];

function Canvas() {
  return (
    <div className="relative min-h-0 flex-1 border-r border-b border-t-2 border-[#707070] border-t-[#111] bg-white">
      <div className="absolute left-[132px] top-[269px] h-[52px] w-[101px] border border-[#16232b] bg-[#74c6f2]">
        <div className="flex h-[18px] items-center justify-center border-b border-[#16232b]">
          <span className="border-r border-black font-['Liberation_Sans',Arial,sans-serif] text-[14px] font-bold leading-4 text-[#111]">Customer</span>
        </div>
      </div>
      <svg width="11" height="11" viewBox="0 0 11 11" className="absolute left-[221px] top-[269px] bg-white">
        <circle cx="5" cy="5" r="3" fill="none" stroke="#111" strokeWidth="1.300" /><path d="M7 7 10 10" stroke="#111" strokeWidth="1.500" />
      </svg>
      <svg width="13" height="13" viewBox="0 0 13 13" className="absolute left-[134px] top-[305px] bg-white">
        <path d="M3 11 9 4M5 3H10V8" fill="none" stroke="#111" strokeWidth="2" />
      </svg>
      <svg width="13" height="13" viewBox="0 0 14 13" className="absolute left-[219px] top-[305px] bg-white">
        <path d="M3 0V8H10M7.500 5.500V11" fill="none" stroke="#111" strokeWidth="2" /><path d="M10 7H14V12H10Z" fill="#111" />
      </svg>
      {handles.map((h) => <span key={h} className={`absolute size-2 bg-black ${h}`} />)}
      <svg width="22" height="22" viewBox="0 0 22 22" className="absolute left-[240px] top-[240px]">
        <path d="M.5.5H21.500V21.500H.5Z" fill="#fdfdfe" stroke="#b4b9c4" />
        <path d="M4 5H8V9H4ZM14 14.500H18V18.500H14Z" fill="#fff" stroke="#7f93c4" />
        <path d="M8 6.500H12.500V16H14" fill="none" stroke="#999" strokeWidth="1.500" />
      </svg>
      <svg width="13" height="20" viewBox="0 0 13 20" className="absolute left-[175px] top-[369px]">
        <path d="M.7.8V15L4 12 6.500 18 9 17 6.500 11.200H11.500Z" fill="#fff" stroke="#111" />
      </svg>
      <span className="absolute right-0 top-[375px] flex h-9 w-4 items-center justify-center gap-0.5 border border-[#b5b5b5] bg-[#dedede]">
        <span className="h-6 w-px bg-[#777]" /><span className="h-6 w-px bg-[#777]" /><span className="h-6 w-px bg-[#777]" />
      </span>
    </div>
  );
}

function Editor() {
  return (
    <section className="flex min-w-0 flex-1 flex-col">
      <div className="flex h-[39px] shrink-0 pt-[5px] pl-4">
        <nav className="flex flex-1 overflow-hidden"><Crumb first /><Crumb /></nav>
        <button aria-label="Notifications" className="relative mr-[18px] mt-0.5 h-6 w-[27px]">
          <svg width="27" height="24" viewBox="0 0 27 24">
            <rect x="1" y="1" width="24" height="22" rx="2" fill="#e3e5e8" stroke="#85887f" strokeWidth="1.500" />
            <path d="M4 11 15 3V16L10 14V20L7 19 6 14Z" fill="#4b5563" />
          </svg>
          <span className="absolute -right-[9px] -top-[2px] flex size-[19px] items-center justify-center rounded-full bg-[#4f9f50] text-[11px] leading-4 text-white">9+</span>
        </button>
        <button aria-label="Project browser" className="mr-[27px] mt-1 h-6">
          <BrowserIcon w={25} h={24} />
        </button>
      </div>
      <div className="flex min-h-0 flex-1">
        <Palette />
        <div className="flex min-w-0 flex-1 flex-col pr-0.5">
          <div className="flex h-[23px] shrink-0 items-end bg-[#f0f0f0]">
            <button className="h-[23px] w-[89px] border border-b-0 border-black bg-white text-[12px] leading-4 text-[#111]">RMO Sales SS</button>
            <svg width="9" height="10" viewBox="0 0 9 10" className="mb-1 ml-[5px]">
              <circle cx="3.500" cy="4" r="2.700" fill="none" stroke="#111" strokeWidth="1.200" /><path d="M5.500 6 8.500 9" stroke="#111" strokeWidth="1.500" />
            </svg>
          </div>
          <Canvas />
        </div>
      </div>
    </section>
  );
}

function StatusBar() {
  return (
    <footer className="flex h-8 shrink-0 items-center justify-end gap-[22px] bg-linear-to-b from-[#f1f1f1] via-[#fbfbfb] to-[#ececec] pr-[26px]">
      <button aria-label="Messages">
        <svg width="21" height="16" viewBox="0 0 21 16"><path d="M.5.5H20.500V15.500H.5Z" fill="#e9f1f8" stroke="#6f8cae" /><path d="M1 1 10.500 10 20 1" fill="none" stroke="#6f8cae" /></svg>
      </button>
      <button aria-label="Notes">
        <svg width="18" height="21" viewBox="0 0 18 21"><path d="M.5.5H12L17.500 6V20.500H.5Z" fill="#eef5fb" stroke="#3f6b9c" /><path d="M12 0V6H18Z" fill="#2f78c8" /><path d="M3 9H14M3 12H14M3 15H11" stroke="#8ba3b8" /><path d="M6 19 14 8" stroke="#3d9a5a" strokeWidth="1.800" /></svg>
      </button>
    </footer>
  );
}

/* ---------- taskbar ---------- */

function Office({ letter, color }: { letter: string; color: string }) {
  return (
    <>
      <path d="M11 4H20V18H11Z" fill="#fff" stroke={color} /><path d="M13 7H18M13 10H18M13 13H18M13 16H18" stroke={color} strokeWidth="1.200" />
      <path d="M1 3 13 1V21L1 19Z" fill={color} />
      <text x="7" y="15" fontSize="11" fontWeight="bold" textAnchor="middle" fill="#fff" fontFamily="Liberation Sans">{letter}</text>
    </>
  );
}

const apps: { n: string; run?: boolean; on?: boolean; icon: React.ReactNode }[] = [
  { n: 'Word', icon: <Office letter="W" color="#2b579a" /> },
  { n: 'File Explorer', run: true, icon: <><path d="M1 3H8L10 5H20V19H1Z" fill="#f7c64a" /><path d="M1 8H20V19H1Z" fill="#fddc7a" /><path d="M4 19V12H17V19H14V15H7V19Z" fill="#3c97dc" /></> },
  { n: 'Firefox', run: true, icon: <><circle cx="11" cy="12" r="9.500" fill="#ff5a3a" /><path d="M14 1Q21 7 20.500 13L15 16Q17 6 10 6Q13 4 14 1Z" fill="#ffcc2e" /><circle cx="11" cy="12" r="4.500" fill="#7542c9" /><path d="M2 8Q8 4 10 10Q6 11 8 15Q3 14 2 8Z" fill="#ff9a2b" /></> },
  { n: 'Excel', icon: <Office letter="X" color="#217346" /> },
  { n: 'PowerPoint', run: true, icon: <Office letter="P" color="#d24726" /> },
  { n: 'Acrobat', icon: <><path d="M2 2H20V20H2Z" fill="#2a0a08" stroke="#e2231a" strokeWidth="1.500" /><path d="M5 16Q11 12 11 5Q11 12 17 14Q11 12 5 16Z" fill="none" stroke="#fff" strokeWidth="1.200" /></> },
  { n: 'Publisher', icon: <Office letter="P" color="#077568" /> },
  { n: 'OneNote', icon: <Office letter="N" color="#80397b" /> },
  { n: 'Paint', icon: <><ellipse cx="10" cy="13" rx="9" ry="7.500" fill="#c6d8e8" /><circle cx="6" cy="11" r="1.800" fill="#e04b3a" /><circle cx="6" cy="15.500" r="1.800" fill="#3a7ed8" /><circle cx="11" cy="17" r="1.800" fill="#49a84a" /><circle cx="10" cy="9" r="1.800" fill="#f2c230" /><path d="M12 14 19 1" stroke="#e0a060" strokeWidth="2.500" /></> },
  { n: 'Command Prompt', icon: <><path d="M1.500 3.500H20.500V19H1.500Z" fill="#050505" stroke="#888" /><path d="M2 4H20V6H2Z" fill="#d0d0d0" /><path d="M4 9H12M14 11H17" stroke="#ccc" strokeDasharray="2 1" /></> },
  { n: 'VirtualBox', icon: <><path d="M11 1 19 5V17L11 21 3 17V5Z" fill="#a9c8ea" /><path d="M11 9 19 5V17L11 21Z" fill="#6f98cc" /><path d="M11 1 19 5 11 9 3 5Z" fill="#d9e8f7" /></> },
  { n: 'XAMPP', icon: <><rect x="1" y="1" width="20" height="20" rx="2" fill="#f07a24" /><path d="M5 5 11 10 17 5M5 17 11 12 17 17" fill="none" stroke="#fff" strokeWidth="2" strokeLinejoin="round" /><path d="M7 5Q3 8 7 11Q3 14 7 17M15 5Q19 8 15 11Q19 14 15 17M7 11H15" fill="none" stroke="#fff" strokeWidth="2" /></> },
  { n: 'GitHub Desktop', icon: <><circle cx="11" cy="11" r="10" fill="#6e3f98" stroke="#d9c9e6" /><path d="M6 6 9 7.500H13L16 6V12Q16 16 11 16Q6 16 6 12Z" fill="#fff" /></> },
  { n: 'Notepad++', run: true, icon: <><path d="M2 2H18V20H2Z" fill="#f4f4ea" stroke="#8a8" /><path d="M2 11H18V20H2Z" fill="#72c94a" /><path d="M6 5V9M9 5V9M12 5V9" stroke="#333" /><path d="M12 14 20 3" stroke="#e8b030" strokeWidth="2.500" /></> },
  { n: 'Sourcetree', icon: <><path d="M11 1Q20 1 20 10Q20 17 11 22Q2 17 2 10Q2 1 11 1Z" fill="#1461e0" /><circle cx="11" cy="9.500" r="3" fill="#fff" /><path d="M11 11V16" stroke="#fff" strokeWidth="1.800" /></> },
  { n: 'Internet Explorer', icon: <><path d="M19 12H6Q7 17 11 17Q14 17 15.500 15H19Q16 20.500 11 20.500Q3 20.500 3 12Q3 4 11 4Q19 4 19 12ZM6.500 9.500H15.500Q14.500 6.500 11 6.500Q7.500 6.500 6.500 9.500Z" fill="#45b8ea" fillRule="evenodd" /><path d="M2 20Q0 14 9 6Q18 0 20.500 2Q21.500 4 19 7" fill="none" stroke="#f2c12c" strokeWidth="1.600" /></> },
  { n: 'Git', icon: <><path d="M11 0 16 5.500 11 11 6 5.500Z" fill="#e04a3a" /><path d="M17 5.500 22 11 17 16.500 12 11Z" fill="#5b9ad8" /><path d="M11 11 16 16.500 11 22 6 16.500Z" fill="#6fb04a" /><path d="M5 5.500 10 11 5 16.500 0 11Z" fill="#e8c03a" /><path d="M8 6V16M8 9 14 12" stroke="#fff" strokeWidth="1.500" /></> },
  { n: 'Visio', icon: <Office letter="V" color="#3955a3" /> },
  { n: 'MySQL Workbench', icon: <><path d="M1 1H20V21H1Z" fill="#1f5f8b" /><path d="M3 4Q8 3 11 8T17 17L15 16M17 17 18 14M4 6 6 13 8 16M10 6Q15 6 17 11" fill="none" stroke="#a9d0ea" strokeWidth="1.200" /></> },
  { n: 'Console', icon: <><path d="M1.500 3.500H20.500V19H1.500Z" fill="#050505" stroke="#888" /><path d="M2 4H20V6H2Z" fill="#d0d0d0" /><path d="M4 9H12" stroke="#ccc" strokeDasharray="2 1" /></> },
  { n: 'IntelliJ IDEA', icon: <><path d="M1 6 8 1 13 5 5 20Z" fill="#fe315d" /><path d="M12 2 20 6 21 14 13 21 6 19Z" fill="#2478f2" /><path d="M1 15 8 12 9 20 4 20Z" fill="#f97a2b" /><path d="M5 5H17V17H5Z" fill="#000" /><path d="M7 7H10M8.500 7V11M7 11H10M13 7V10L11.500 11M7 15H11" fill="none" stroke="#fff" /></> },
  { n: 'Visual Studio', icon: <><path d="M15 1 20 3V19L15 21Z" fill="#b98ae6" /><path d="M15 3 3 15 1.500 14V8L3 7 15 19" fill="none" stroke="#8c5cc4" strokeWidth="3.500" /></> },
  { n: 'Python IDE', icon: <><path d="M3 3H14V13L10 16L3 14Z" fill="#f4c430" /><path d="M9 5H14V9H9Z" fill="#ffe88a" /><path d="M11 12 13 15 11 18 15 17 18 20 18 16 21 14 17 13 15 10 14 13Z" fill="#3776ab" /><path d="M16 2H20V6M3 17V20H7" fill="none" stroke="#5a9a4a" strokeWidth="1.500" /></> },
  { n: 'Chrome', icon: <><circle cx="11" cy="11" r="9.500" fill="#f4c20d" /><path d="M2.800 6.200A9.500 9.500 0 0 1 19.800 7.500H11L6.800 13Z" fill="#db4437" /><path d="M2.800 6.200A9.500 9.500 0 0 0 10 20.500L14 13H7Z" fill="#0f9d58" /><circle cx="11" cy="11" r="4.500" fill="#fff" /><circle cx="11" cy="11" r="3.500" fill="#4285f4" /></> },
  { n: 'Edge', icon: <><circle cx="11" cy="11" r="9.500" fill="#1b7fd4" /><path d="M2 9Q4 1.500 11 1.500Q20.500 2 20.500 10Q20 14 15 14Q12 13.500 13 11Q13 7 8 7Q4 7 2 9Z" fill="#4cc98a" /><path d="M8 8Q4 13 9 18Q13 20 17 18Q12 21 8 20Q1 17 2 10Q4 7 8 8Z" fill="#0c59a4" /></> },
  { n: 'Visual Studio Code', icon: <><path d="M15 1 20 3V19L15 21Z" fill="#35a8f0" /><path d="M15 3 3 15M3 7 15 19" fill="none" stroke="#1f86cc" strokeWidth="3.500" /></> },
  { n: 'Teams', run: true, icon: <><circle cx="17" cy="6" r="2.500" fill="#7b83eb" /><path d="M11 9H21V15Q20 19 15 19Z" fill="#5059c9" /><circle cx="12" cy="4.500" r="3.200" fill="#7b83eb" /><path d="M8 9H17V16Q16 20 12 20Z" fill="#7b83eb" /><path d="M1 6H12V17H1Z" fill="#4b53bc" /><path d="M4 9H9M6.500 9V15" stroke="#fff" strokeWidth="1.500" /></> },
  { n: 'Zoom', run: true, icon: <><rect x="1.500" y="1" width="19" height="20" rx="6" fill="#3f8cf4" /><path d="M5 8H13V14.500H5ZM14 10 17.500 8V14.500L14 12.500Z" fill="#fff" /></> },
  { n: 'Visual Paradigm', run: true, on: true, icon: <><path d="M11 0 20 11 11 22 2 11Z" fill="#e8c8c8" /><path d="M11 1.500 18.500 11 11 20.500 3.500 11Z" fill="#d2232f" /><path d="M11 5 14 9Q15 12 12 13V16L8 11 11 8V11" fill="none" stroke="#fff" strokeWidth="1.200" /></> },
];

function TaskButton({ label, w = 'w-[45px]', children }: { label: string; w?: string; children: React.ReactNode }) {
  return <button aria-label={label} className={`${w} flex h-full shrink-0 items-center justify-center`}>{children}</button>;
}

function Taskbar() {
  return (
    <footer className="flex h-10 shrink-0 border-t-2 border-black bg-[#282828]">
      <TaskButton label="Start" w="w-11"><svg width="20" height="20" viewBox="0 0 20 20"><path d="M0 3 8.500 1.800V9.500H0ZM9.500 1.600 20 0V9.500H9.500ZM0 10.500H8.500V18.200L0 17ZM9.500 10.500H20V20L9.500 18.400Z" fill="#fff" /></svg></TaskButton>
      <TaskButton label="Search"><svg width="20" height="20" viewBox="0 0 20 20" fill="none" stroke="#fff" strokeWidth="1.600"><circle cx="12.500" cy="7.500" r="6.500" /><path d="M8 12.500 1 19.500" /></svg></TaskButton>
      <TaskButton label="Cortana"><svg width="20" height="20" viewBox="0 0 20 20"><circle cx="10" cy="10" r="8" fill="none" stroke="#fff" strokeWidth="2.500" /></svg></TaskButton>
      <TaskButton label="Task View" w="w-11"><svg width="20" height="20" viewBox="0 0 20 20" fill="none" stroke="#fff" strokeWidth="1.300"><path d="M1 5.500H14V14.500H1ZM1 .5V2.500H14V.5M1 19.500V17.500H14V19.500M18.500 0V6M18.500 9V20M17 8H20" /></svg></TaskButton>
      <div className="flex min-w-0 flex-1 overflow-hidden pl-[5px]">
        {apps.map((a) => (
          <button key={a.n} aria-label={a.n} className={`flex h-full w-[46px] shrink-0 flex-col items-center justify-end ${a.on ? 'bg-[#565656]' : ''}`}>
            <svg width="20" height="20" viewBox="0 0 22 22" className="mb-1.5">{a.icon}</svg>
            <span className={`h-[3px] ${a.on ? 'w-full' : 'w-[34px]'} ${a.run ? 'bg-[#76b9ed]' : ''}`} />
          </button>
        ))}
      </div>
      <TaskButton label="Show hidden icons" w="w-10"><svg width="16" height="10" viewBox="0 0 16 10"><path d="M1 9 8 1 15 9" fill="none" stroke="#fff" strokeWidth="1.300" /></svg></TaskButton>
      <TaskButton label="Battery" w="w-10"><svg width="20" height="14" viewBox="0 0 20 14"><path d="M6 3H18V12H4V7" fill="#fff" stroke="#fff" /><path d="M19 5V10" stroke="#fff" strokeWidth="1.500" /><path d="M0 2H6M1.500 0V2M4.500 0V2M1 3V5H5V3M3 5V9" fill="none" stroke="#fff" /></svg></TaskButton>
      <TaskButton label="Network" w="w-10"><svg width="17" height="17" viewBox="0 0 17 17" fill="none" stroke="#fff" strokeWidth="1.200"><path d="M1 16Q1 1 16 1M5 16Q5 5 16 5M9 16Q9 9 16 9" /><circle cx="14" cy="15" r="1.200" fill="#fff" /></svg></TaskButton>
      <TaskButton label="Windows Ink" w="w-10"><svg width="20" height="20" viewBox="0 0 20 20" fill="none" stroke="#fff" strokeWidth="1.300"><path d="M8 14 12 2Q15 0 15 4L10 15 8 17ZM8 10Q1 10 1 14Q2 19 7 18M11 13Q19 12 19 8Q18 6 15 9" /></svg></TaskButton>
      <TaskButton label="Touch keyboard" w="w-10"><svg width="29" height="17" viewBox="0 0 29 17" fill="none" stroke="#fff"><path d="M.5.5H28.500V16.500H.5Z" strokeWidth="1.200" /><path d="M4 5H25M4 8.500H25" strokeDasharray="2 2" strokeWidth="1.500" /><path d="M4 12.500H6M8 12.500H21M23 12.500H25" strokeWidth="1.500" /></svg></TaskButton>
      <time className="flex w-[78px] items-center justify-center whitespace-nowrap text-[14px] leading-5 text-white">12:39 PM</time>
      <span className="w-[6px] border-l border-[#6b6b6b]" />
    </footer>
  );
}

export default function App() {
  return (
    <div className="flex h-screen w-full flex-col overflow-hidden bg-[#f0f0f0] font-['Noto_Sans','Open_Sans',sans-serif]">
      <TitleBar />
      <RibbonTabs />
      <Ribbon />
      <main className="flex min-h-0 flex-1 bg-[#f0f0f0]">
        <SideStrip />
        <span className="w-[7px] shrink-0" />
        <Navigator />
        <Editor />
      </main>
      <StatusBar />
      <Taskbar />
    </div>
  );
}
